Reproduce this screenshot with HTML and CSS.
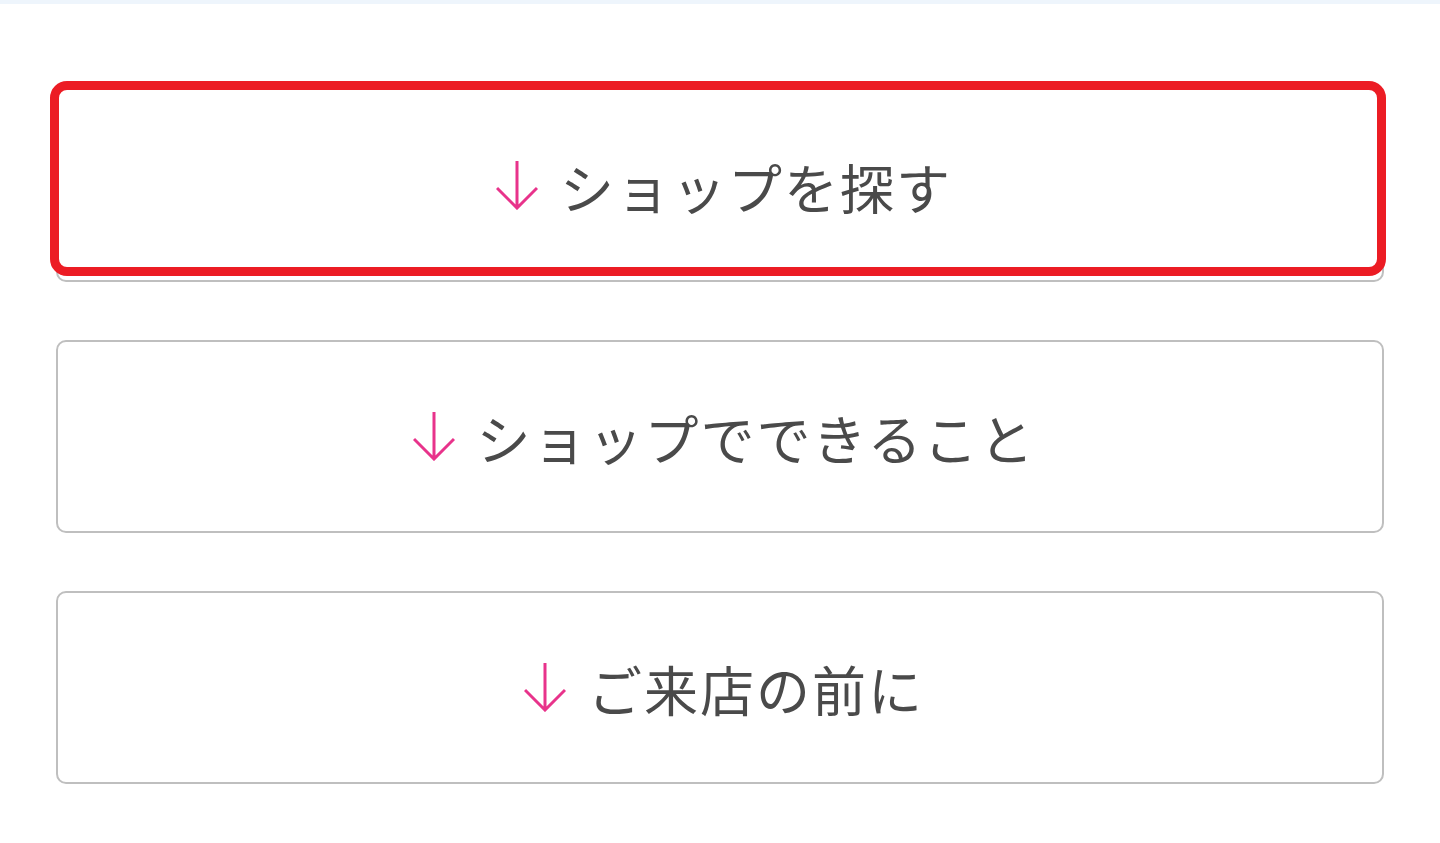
FILE: index.html
```html
<!DOCTYPE html>
<html lang="ja">
  <head>
    <meta charset="utf-8" />
    <meta name="viewport" content="width=device-width, initial-scale=1" />
    <link rel="stylesheet" href="styles.css">
  </head>
  <body>
    <div class="top-bar"></div>
    <div class="container">
      <a class="anchor-btn is-focused" href="#search">
        <span class="btn-inner">
          <svg class="arrow" viewBox="0 0 42 50" width="42" height="50">
            <path d="M21 1 V48 M1 28 L21 48 L41 28" />
          </svg>
          <span class="label">ショップを探す</span>
        </span>
      </a>
      <a class="anchor-btn" href="#service">
        <span class="btn-inner">
          <svg class="arrow" viewBox="0 0 42 50" width="42" height="50">
            <path d="M21 1 V48 M1 28 L21 48 L41 28" />
          </svg>
          <span class="label">ショップでできること</span>
        </span>
      </a>
      <a class="anchor-btn" href="#before">
        <span class="btn-inner">
          <svg class="arrow" viewBox="0 0 42 50" width="42" height="50">
            <path d="M21 1 V48 M1 28 L21 48 L41 28" />
          </svg>
          <span class="label">ご来店の前に</span>
        </span>
      </a>
    </div>
  </body>
</html>
```
FILE: styles.css
```css
* {
  box-sizing: border-box;
}
body {
  margin: 0;
  background-color: #fff;
  font-family: "Noto Sans CJK JP", "Noto Sans", sans-serif;
}

.top-bar {
  height: 4px;
  background-color: #eef5fc;
}

.container {
  display: flex;
  flex-direction: column;
  row-gap: 58px;
  padding: 85px 56px 0;
}

.anchor-btn {
  position: relative;
  display: flex;
  align-items: center;
  justify-content: center;
  height: 193px;
  border: 2px solid #bfbfbf;
  border-radius: 10px;
  background-color: #fff;
  color: #4a4a4a;
  text-decoration: none;
}

.anchor-btn.is-focused::after {
  content: "";
  position: absolute;
  top: -10px;
  left: -8px;
  right: -4px;
  bottom: 4px;
  border: 9px solid #ec1c24;
  border-radius: 17px;
  background-color: #fff;
}

.btn-inner {
  position: relative;
  z-index: 1;
  display: flex;
  align-items: center;
  column-gap: 22px;
  margin-top: 3px;
  padding-left: 8px;
}

.arrow {
  display: block;
  fill: none;
  stroke: #e8338b;
  stroke-width: 3;
  margin-top: -4px;
}

.label {
  font-size: 54px;
  line-height: 1;
  letter-spacing: 2px;
}
```
